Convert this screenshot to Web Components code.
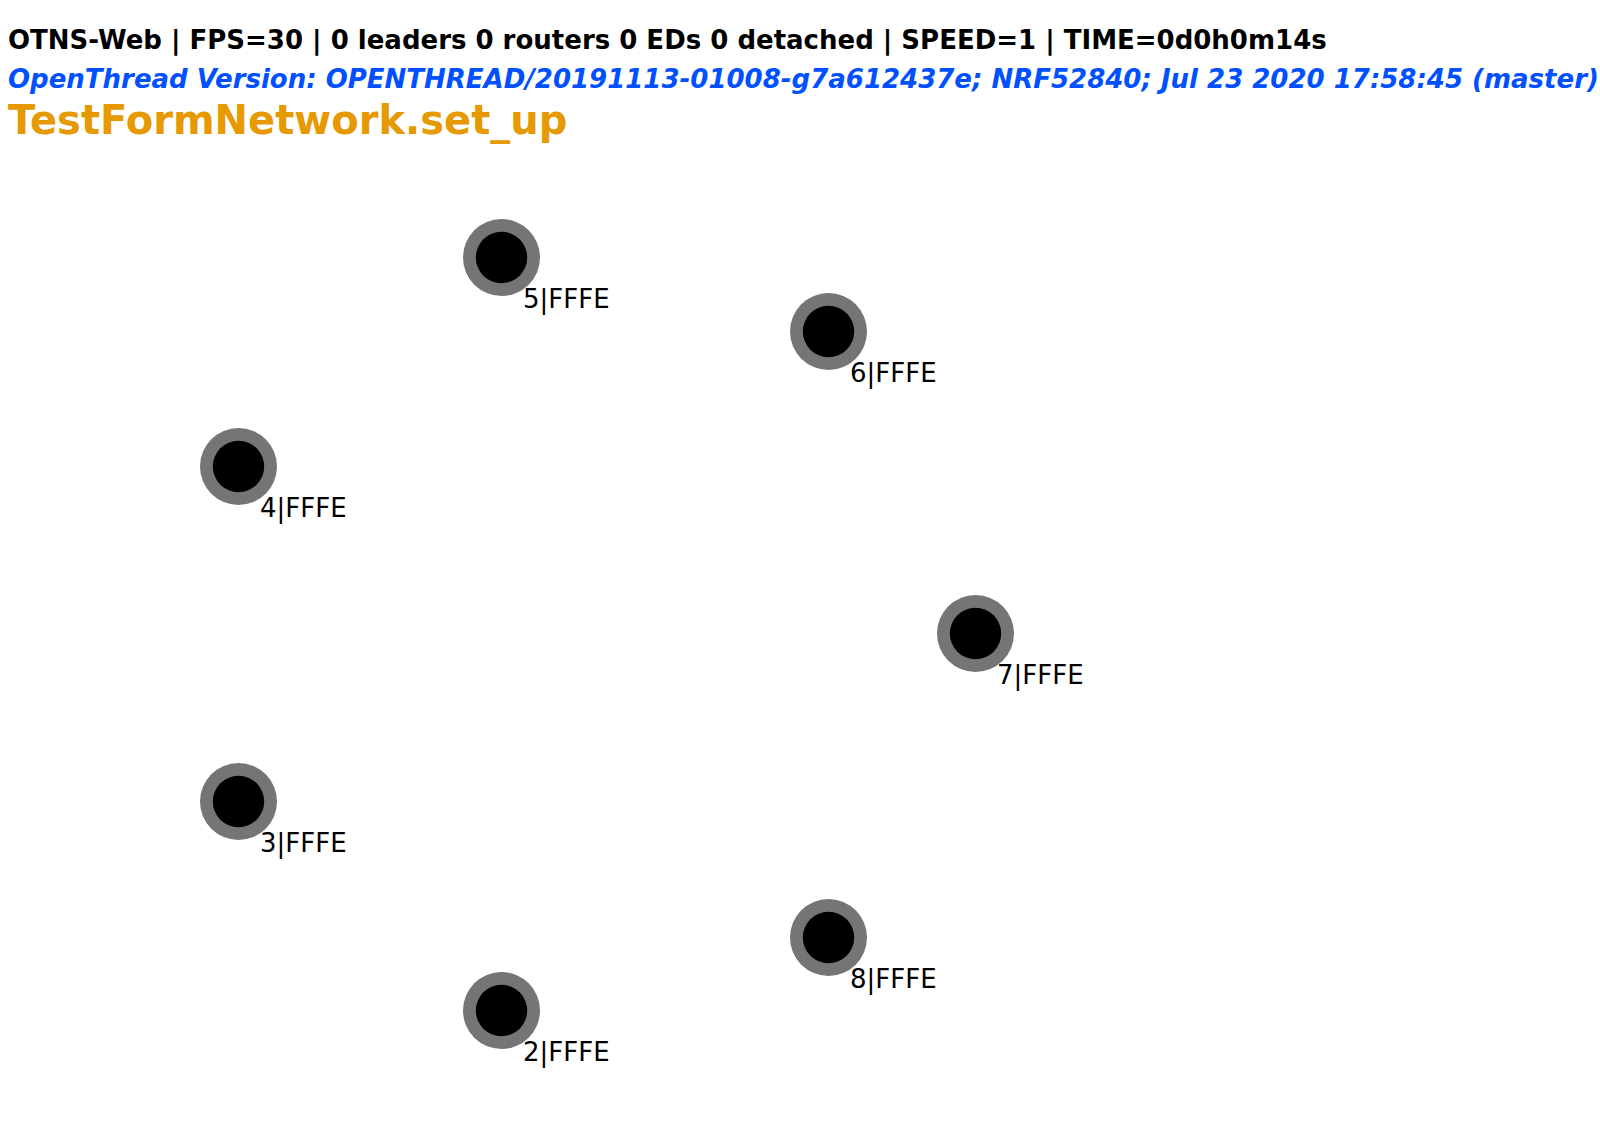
<!DOCTYPE html>
<html lang="en">
<head>
<meta charset="utf-8">
<title>OTNS-Web</title>
<style>
html, body { margin: 0; min-height: 100%; background: #fff; }
</style>
</head>
<body>
<otns-app></otns-app>
<script>
class OtnsHeader extends HTMLElement {
  constructor() {
    super();
    this.attachShadow({ mode: 'open' }).innerHTML = `
      <style>
        :host { display: block; padding: 21px 8px 0; font-family: Verdana, "DejaVu Sans", sans-serif; font-weight: bold; white-space: nowrap; }
        p, h1 { margin: 0; font-size: 26px; line-height: 39px; }
        .version { color: #0050ff; font-style: italic; }
        h1 { color: #e69900; font-size: 40px; line-height: 42px; }
      </style>
      <p><slot name="status"></slot></p>
      <p class="version"><slot name="version"></slot></p>
      <h1><slot name="title"></slot></h1>`;
  }
}
customElements.define('otns-header', OtnsHeader);

class OtnsNode extends HTMLElement {
  constructor() {
    super();
    this.attachShadow({ mode: 'open' }).innerHTML = `
      <style>
        :host { position: absolute; width: 77px; height: 77px; }
        svg { display: block; }
        span { position: absolute; left: 60px; top: 65px; font: 26px/30px "Comic Sans MS", "DejaVu Sans", sans-serif; color: #000; white-space: nowrap; }
      </style>
      <svg width="77" height="77" viewBox="0 0 77 77" aria-hidden="true">
        <circle cx="38.5" cy="38.5" r="38.5" fill="#757575"/>
        <circle cx="38.5" cy="38.5" r="25.7" fill="#000"/>
      </svg>
      <span><slot></slot></span>`;
  }
  connectedCallback() {
    this.style.left = this.getAttribute('x') + 'px';
    this.style.top = this.getAttribute('y') + 'px';
  }
}
customElements.define('otns-node', OtnsNode);

class OtnsApp extends HTMLElement {
  constructor() {
    super();
    this.attachShadow({ mode: 'open' }).innerHTML = `
      <style>
        :host { display: block; position: relative; min-height: 100vh; overflow: hidden; }
      </style>
      <otns-header>
        <span slot="status">OTNS-Web | FPS=30 | 0 leaders 0 routers 0 EDs 0 detached | SPEED=1 | TIME=0d0h0m14s</span>
        <span slot="version">OpenThread Version: OPENTHREAD/20191113-01008-g7a612437e; NRF52840; Jul 23 2020 17:58:45 (master)</span>
        <span slot="title">TestFormNetwork.set_up</span>
      </otns-header>
      <main>
        <otns-node x="463" y="972">2|FFFE</otns-node>
        <otns-node x="200" y="763">3|FFFE</otns-node>
        <otns-node x="200" y="428">4|FFFE</otns-node>
        <otns-node x="463" y="219">5|FFFE</otns-node>
        <otns-node x="790" y="293">6|FFFE</otns-node>
        <otns-node x="937" y="595">7|FFFE</otns-node>
        <otns-node x="790" y="899">8|FFFE</otns-node>
      </main>`;
  }
}
customElements.define('otns-app', OtnsApp);
</script>
</body>
</html>
